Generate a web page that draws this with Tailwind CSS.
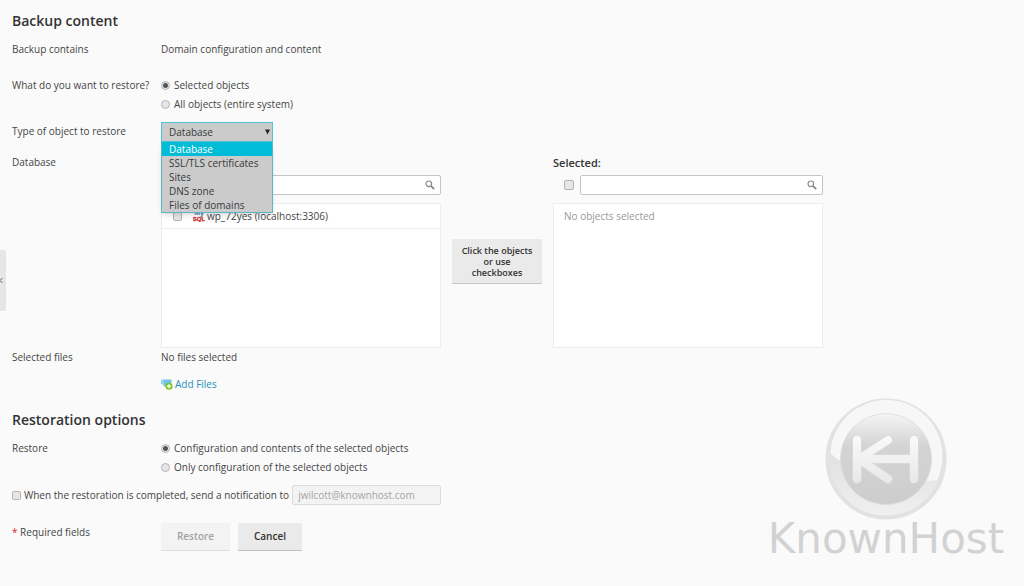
<!DOCTYPE html>
<html lang="en">
<head>
    <meta charset="UTF-8">
    <meta name="viewport" content="width=device-width, initial-scale=1">
    <title>Restore backup</title>
    <script src="https://cdn.jsdelivr.net/npm/@tailwindcss/browser@4"></script>
</head>
<body class="relative min-h-screen bg-[#fafafa] text-[#454545] font-['Open_Sans','Noto_Sans',sans-serif] text-[10px] leading-[19px]">

    <!-- Sidebar handle -->
    <button type="button" aria-label="Toggle sidebar" class="absolute left-0 top-[250px] w-[6px] h-[61px] bg-[#e6e6e6] rounded-r-xs">
        <svg class="w-[3px] h-[7px]" viewBox="0 0 3 7" fill="none" stroke="#666"><path d="M2.5 1L0 3.5L2.5 6"/></svg>
    </button>

    <form class="px-3 pt-[7px] pb-6">
        <!-- Backup content -->
        <h2 class="text-[14px] leading-7 font-semibold text-[#333] mb-[5px]">Backup content</h2>

        <div class="flex">
            <div class="w-[149px] shrink-0">Backup contains</div>
            <div>Domain configuration and content</div>
        </div>

        <div class="flex mt-[17px]" role="radiogroup" aria-labelledby="whatLabel">
            <div id="whatLabel" class="w-[149px] shrink-0">What do you want to restore?</div>
            <div>
                <label class="flex items-center gap-1">
                    <input type="radio" name="what" checked class="appearance-none size-[9px] rounded-full border border-[#b5b5b5] bg-[#e6e6e6] checked:bg-[radial-gradient(circle,#555_0_2px,#e6e6e6_3px)]">
                    Selected objects
                </label>
                <label class="flex items-center gap-1">
                    <input type="radio" name="what" class="appearance-none size-[9px] rounded-full border border-[#b5b5b5] bg-[#e6e6e6] checked:bg-[radial-gradient(circle,#555_0_2px,#e6e6e6_3px)]">
                    All objects (entire system)
                </label>
            </div>
        </div>

        <div class="flex mt-2">
            <label for="objectType" class="w-[149px] shrink-0">Type of object to restore</label>
            <div class="relative w-28">
                <select id="objectType" class="appearance-none block w-full h-5 pl-[7px] border border-[#4fc4d4] bg-[#cbcbcb] text-[#3a3a3a]">
                    <option selected>Database</option>
                    <option>SSL/TLS certificates</option>
                    <option>Sites</option>
                    <option>DNS zone</option>
                    <option>Files of domains</option>
                </select>
                <svg class="absolute right-[3px] top-[7px] w-[5px] h-[6px] pointer-events-none" viewBox="0 0 5 6" fill="#222"><path d="M0 .5H5L2.5 5.5Z"/></svg>
                <!-- Open list -->
                <ul role="listbox" aria-label="Type of object to restore" class="absolute z-10 left-0 top-5 w-full border border-t-0 border-[#5fb6c2] bg-[#cbcbcb] text-[#3a3a3a] leading-[14px] shadow-md">
                    <li role="option" aria-selected="true" class="pl-[7px] bg-[#00bcd6] text-white">Database</li>
                    <li role="option" class="pl-[7px]">SSL/TLS certificates</li>
                    <li role="option" class="pl-[7px]">Sites</li>
                    <li role="option" class="pl-[7px]">DNS zone</li>
                    <li role="option" class="pl-[7px]">Files of domains</li>
                </ul>
            </div>
        </div>

        <div class="flex mt-[11px]">
            <div class="w-[149px] shrink-0">Database</div>
            <div class="flex items-end w-full max-w-[662px]">
                <!-- Available objects -->
                <div class="flex-[280]">
                    <div class="flex items-center pl-[11px]">
                        <input type="checkbox" aria-label="Select all available" class="appearance-none size-[10px] rounded-xs border border-[#b5b5b5] bg-[#e6e6e6]">
                        <div class="relative flex-1 ml-[6px]">
                            <input type="text" aria-label="Search available" class="block w-full h-5 pl-2 pr-6 rounded-xs border border-[#c4c4c4] bg-white">
                            <svg class="absolute right-[6px] top-[5px] size-[10px]" viewBox="0 0 10 10" fill="none" stroke="#888"><circle cx="3.8" cy="3.8" r="2.8" stroke-width="1.2"/><path d="M6 6L9.2 9.2" stroke-width="1.8"/></svg>
                        </div>
                    </div>
                    <div class="mt-2 h-[145px] border border-[#ededed] bg-white">
                        <label class="flex items-center h-[25px] pl-[11px] border-b border-[#ededed]">
                            <input type="checkbox" class="appearance-none size-[9px] rounded-xs border border-[#b5b5b5] bg-[#e6e6e6]">
                            <svg class="ml-[11px] mr-[2px] w-3 h-3" viewBox="0 0 12 12" aria-hidden="true" font-family="Liberation Sans, sans-serif" font-weight="bold" text-anchor="middle">
                                <text x="6" y="5" font-size="7" fill="#3c7fa8">My</text>
                                <text x="6" y="11" font-size="6" fill="#cf2a2a" stroke="#cf2a2a" stroke-width=".3">SQL</text>
                            </svg>
                            wp_72yes (localhost:3306)
                        </label>
                    </div>
                </div>

                <div class="w-28 px-[11px] pb-16">
                    <button type="button" class="w-full h-[45px] px-2 bg-[#eaeaea] border-b border-[#c6c6c6] text-[9px] leading-[11px] font-semibold text-[#333]">Click the objects or use checkboxes</button>
                </div>

                <!-- Selected objects -->
                <div class="flex-[270]">
                    <div class="text-[11px] font-semibold text-[#333]">Selected:</div>
                    <div class="flex items-center mt-[3px] pl-[11px]">
                        <input type="checkbox" aria-label="Select all selected" class="appearance-none size-[10px] rounded-xs border border-[#b5b5b5] bg-[#e6e6e6]">
                        <div class="relative flex-1 ml-[6px]">
                            <input type="text" aria-label="Search selected" class="block w-full h-5 pl-2 pr-6 rounded-xs border border-[#c4c4c4] bg-white">
                            <svg class="absolute right-[6px] top-[5px] size-[10px]" viewBox="0 0 10 10" fill="none" stroke="#888"><circle cx="3.8" cy="3.8" r="2.8" stroke-width="1.2"/><path d="M6 6L9.2 9.2" stroke-width="1.8"/></svg>
                        </div>
                    </div>
                    <div class="mt-2 h-[145px] px-[10px] py-[3px] border border-[#ededed] bg-white text-[#999]">No objects selected</div>
                </div>
            </div>
        </div>

        <div class="flex">
            <div class="w-[149px] shrink-0">Selected files</div>
            <div>
                <div>No files selected</div>
                <a href="#" class="flex items-center gap-[2px] mt-2 text-[#2391b8]">
                    <svg class="w-3 h-[11px]" viewBox="0 0 12 11">
                        <path d="M0 .5H3V6H1.500V5H0Z" fill="#8ed0ea"/>
                        <path d="M2.500 .5H10.500V7.500H2.500Z" fill="#6cc3e6"/>
                        <path d="M2 .5V6.500" stroke="#d8f0f9" stroke-width=".5"/>
                        <circle cx="8" cy="7.200" r="3.500" fill="#7cc81e"/>
                        <path d="M8 5.200V9.200M6 7.200H10" stroke="#fff" stroke-width="1.400"/>
                    </svg>
                    Add Files
                </a>
            </div>
        </div>

        <!-- Restoration options -->
        <h2 class="text-[14px] leading-7 font-semibold text-[#333] mt-3 mb-[5px]">Restoration options</h2>

        <div class="flex" role="radiogroup" aria-labelledby="restoreLabel">
            <div id="restoreLabel" class="w-[149px] shrink-0">Restore</div>
            <div>
                <label class="flex items-center gap-1">
                    <input type="radio" name="mode" checked class="appearance-none size-[9px] rounded-full border border-[#b5b5b5] bg-[#e6e6e6] checked:bg-[radial-gradient(circle,#555_0_2px,#e6e6e6_3px)]">
                    Configuration and contents of the selected objects
                </label>
                <label class="flex items-center gap-1">
                    <input type="radio" name="mode" class="appearance-none size-[9px] rounded-full border border-[#b5b5b5] bg-[#e6e6e6] checked:bg-[radial-gradient(circle,#555_0_2px,#e6e6e6_3px)]">
                    Only configuration of the selected objects
                </label>
            </div>
        </div>

        <div class="flex items-center mt-2">
            <label class="flex items-center gap-[3px]">
                <input type="checkbox" class="appearance-none size-[9px] rounded-xs border border-[#b5b5b5] bg-[#e6e6e6]">
                When the restoration is completed, send a notification to
            </label>
            <input type="email" aria-label="Notification email" disabled value="jwilcott@knownhost.com" class="ml-[3px] w-[149px] h-5 px-[5px] rounded-xs border border-[#dcdcdc] bg-[#f3f3f3] text-[#a5a5a5]">
        </div>

        <div class="flex mt-[18px]">
            <div class="w-[149px] shrink-0"><span class="text-[#d8232a]">*</span> Required fields</div>
            <button type="submit" disabled class="w-[69px] h-7 bg-[#f3f3f3] border-b border-[#dedede] font-semibold text-[#a3a3a3]">Restore</button>
            <button type="button" class="ml-2 w-16 h-7 bg-[#eaeaea] border-b border-[#c0c0c0] font-semibold text-[#333]">Cancel</button>
        </div>
    </form>

    <!-- Watermark -->
    <div class="absolute right-[10px] top-[398px] w-[256px] flex flex-col items-center pointer-events-none">
        <svg class="size-[122px]" viewBox="0 0 122 122" aria-hidden="true">
            <defs>
                <linearGradient id="ring" x2="0" y2="1"><stop offset="0" stop-color="#ececec"/><stop offset=".5" stop-color="#e2e2e2"/><stop offset="1" stop-color="#f0f0f0"/></linearGradient>
                <linearGradient id="disc" x2="0" y2="1"><stop offset="0" stop-color="#f5f5f5"/><stop offset=".35" stop-color="#d4d4d4"/><stop offset="1" stop-color="#cdcdcd"/></linearGradient>
                <linearGradient id="mark" gradientUnits="userSpaceOnUse" x1="0" y1="38" x2="0" y2="84"><stop offset="0" stop-color="#fafafa"/><stop offset="1" stop-color="#e8e8e8"/></linearGradient>
            </defs>
            <circle cx="61" cy="61" r="58.500" fill="url(#ring)" stroke="#e2e2e2" stroke-width="4"/>
            <path d="M5.500 55A56 56 0 1 1 112 82C80 86 30 80 5.500 55Z" fill="#f7f7f7"/>
            <circle cx="61" cy="61" r="45.500" fill="url(#disc)" stroke="#dadada" stroke-width=".8"/>
            <g fill="none" stroke="#dadada" stroke-width="9.500" stroke-linecap="round" stroke-linejoin="round">
                <path d="M32 42V81M63 42L34 61L63 81M40 61H89M89 42V81"/>
            </g>
            <g fill="none" stroke="url(#mark)" stroke-width="8" stroke-linecap="round">
                <path d="M32 42V81M63 42L34 61L63 81M89 42V81M40 61L89 61.100"/>
            </g>
        </svg>
        <div class="font-['DejaVu_Sans',sans-serif] text-[42px] leading-[38px] text-[#d2d2d2]">KnownHost</div>
    </div>
</body>
</html>
